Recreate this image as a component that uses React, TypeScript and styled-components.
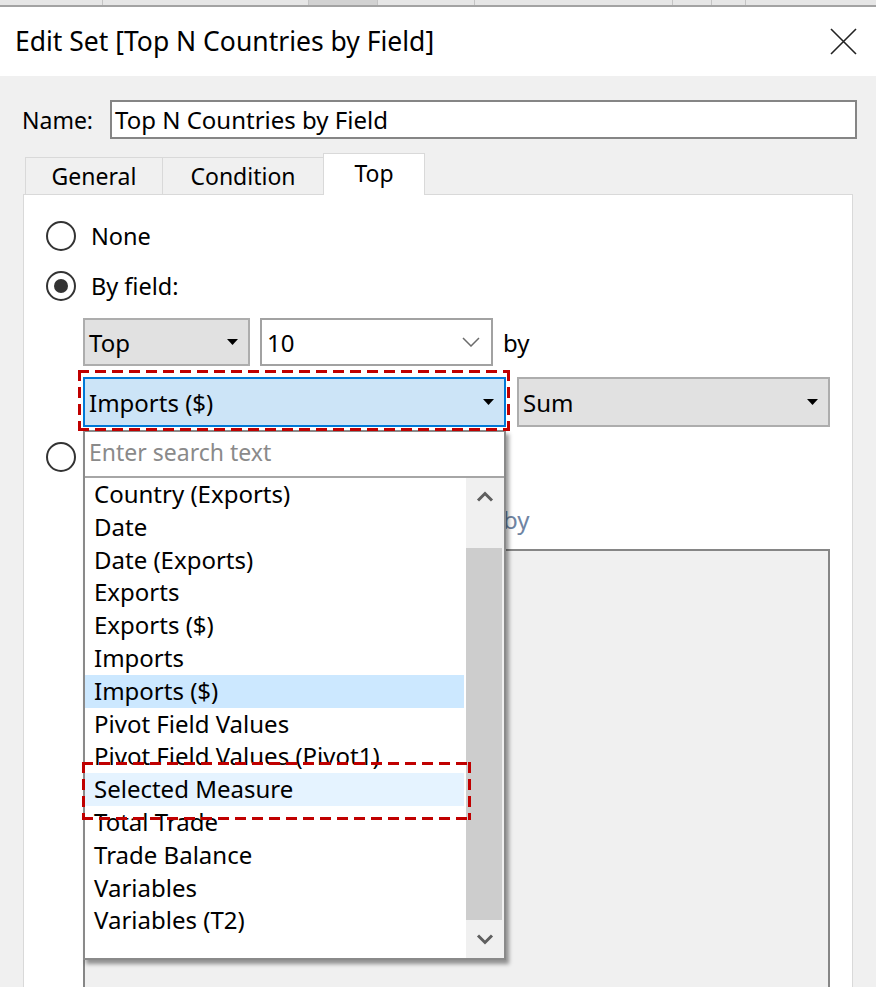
import React from "react";
import styled, { createGlobalStyle } from "styled-components";

const FONT = `"Segoe UI", "Noto Sans", "Open Sans", sans-serif`;

const GlobalStyle = createGlobalStyle`
  html, body { margin: 0; padding: 0; background: #f0f0f0; }
  body { font-family: ${FONT}; color: #000; }
  #root { width: 876px; height: 987px; overflow: hidden; }
  * { box-sizing: border-box; }
`;

const Window = styled.div`
  width: 876px;
  height: 987px;
  display: flex;
  flex-direction: column;
  background: #f0f0f0;
  overflow: hidden;
`;

const TopStrip = styled.div`
  height: 7px;
  flex: none;
  display: flex;
  background: #e6e6e6;
  border-bottom: 2px solid #a3a3a3;
`;

const StripCell = styled.div<{ $w: number; $dark?: boolean }>`
  width: ${(p) => p.$w}px;
  flex: none;
  border-right: 1px solid #c4c4c4;
  background: ${(p) => (p.$dark ? "#d2d2d2" : "transparent")};
`;

const TitleBar = styled.div`
  height: 69px;
  flex: none;
  background: #fff;
  display: flex;
  align-items: center;
  justify-content: space-between;
  padding: 0 19px 0 15px;
`;

const Title = styled.div`
  font-size: 26.5px;
  line-height: 1;
  color: #000;
`;

const Body = styled.div`
  flex: 1;
  min-height: 0;
  display: flex;
  flex-direction: column;
  padding: 24px 0 0 22px;
`;

const NameRow = styled.div`
  display: flex;
  align-items: center;
  height: 39px;
`;

const NameLabel = styled.span`
  width: 88px;
  font-size: 23px;
`;

const NameInput = styled.div`
  width: 747px;
  height: 39px;
  border: 2px solid #858585;
  background: #fff;
  display: flex;
  align-items: center;
  padding-left: 3px;
  font-size: 24px;
`;

const TabStrip = styled.div`
  display: flex;
  align-items: flex-end;
  height: 41px;
  margin: 14px 0 0 3px;
  position: relative;
  z-index: 1;
`;

const Tab = styled.div<{ $w: number; $active?: boolean }>`
  width: ${(p) => p.$w}px;
  height: ${(p) => (p.$active ? 42 : 37)}px;
  margin-bottom: ${(p) => (p.$active ? -1 : 0)}px;
  margin-right: -1px;
  border: 1px solid #d9d9d9;
  border-bottom: none;
  background: ${(p) => (p.$active ? "#fff" : "#f0f0f0")};
  display: flex;
  align-items: center;
  justify-content: center;
  padding-bottom: ${(p) => (p.$active ? 4 : 0)}px;
  font-size: 23px;
`;

const Panel = styled.div`
  margin-left: 1px;
  width: 830px;
  flex: 1;
  background: #fff;
  border: 1px solid #d9d9d9;
  border-bottom: none;
  padding: 21px 0 0 22px;
  display: flex;
  flex-direction: column;
`;

const OptionRow = styled.div<{ $mt: number }>`
  display: flex;
  align-items: center;
  gap: 15px;
  height: 40px;
  margin-top: ${(p) => p.$mt}px;
  font-size: 23.5px;
`;

const RadioCircle = styled.span<{ $checked?: boolean }>`
  width: 30px;
  height: 30px;
  flex: none;
  border-radius: 50%;
  border: 2px solid #333;
  background: #fff;
  display: flex;
  align-items: center;
  justify-content: center;
  &::after {
    content: "";
    width: 14px;
    height: 14px;
    border-radius: 50%;
    background: #333;
    display: ${(p) => (p.$checked ? "block" : "none")};
  }
`;

const FieldRow = styled.div<{ $mt: number; $h: number; $gap: number }>`
  display: flex;
  align-items: center;
  gap: ${(p) => p.$gap}px;
  height: ${(p) => p.$h}px;
  margin: ${(p) => p.$mt}px 0 0 37px;
  font-size: 24px;
`;

const SelectBox = styled.div<{ $w: number; $variant?: "normal" | "focused" | "disabled" }>`
  position: relative;
  width: ${(p) => p.$w}px;
  height: 100%;
  flex: none;
  display: flex;
  align-items: center;
  justify-content: space-between;
  padding: 0 10px 0 4px;
  font-size: 24px;
  color: #000;
  background: ${(p) =>
    p.$variant === "focused" ? "#cce4f7" : p.$variant === "disabled" ? "#f0f0f0" : "#e1e1e1"};
  border: 2px solid
    ${(p) => (p.$variant === "focused" ? "#0078d7" : p.$variant === "disabled" ? "#cccccc" : "#adadad")};
`;

const ComboBox = styled.div<{ $w: number; $disabled?: boolean }>`
  width: ${(p) => p.$w}px;
  height: 100%;
  flex: none;
  display: flex;
  align-items: center;
  justify-content: space-between;
  padding: 0 11px 0 5px;
  font-size: 24px;
  background: ${(p) => (p.$disabled ? "#f0f0f0" : "#fff")};
  border: 2px solid ${(p) => (p.$disabled ? "#cccccc" : "#a2a2a2")};
`;

const ByText = styled.span<{ $disabled?: boolean }>`
  font-size: 24px;
  color: ${(p) => (p.$disabled ? "#6f84a3" : "#000")};
`;

const FormulaBox = styled.div`
  margin: 6px 0 0 37px;
  width: 747px;
  flex: 1;
  background: #f0f0f0;
  border: 2px solid #868686;
  border-bottom: none;
`;

const Popup = styled.div`
  position: absolute;
  left: 0;
  top: calc(100% + 3px);
  width: 423px;
  height: 530px;
  background: #fff;
  border: 2px solid #8a8a8a;
  box-shadow: 3px 4px 4px rgba(0, 0, 0, 0.4);
  z-index: 5;
  display: flex;
  flex-direction: column;
`;

const SearchField = styled.div`
  height: 46px;
  flex: none;
  border-bottom: 2px solid #a6a6a6;
  display: flex;
  align-items: center;
  padding: 0 0 4px 4px;
  font-size: 23px;
  color: #8a8a8a;
`;

const ListArea = styled.div`
  flex: 1;
  display: flex;
  min-height: 0;
`;

const ItemColumn = styled.div`
  flex: 1;
  padding-right: 2px;
`;

const Item = styled.div<{ $state?: "selected" | "hover" }>`
  position: relative;
  height: 32.8px;
  line-height: 32.8px;
  padding-left: 9px;
  font-size: 24px;
  white-space: nowrap;
  background: ${(p) =>
    p.$state === "selected" ? "#cce8ff" : p.$state === "hover" ? "#e5f3ff" : "transparent"};
`;

const ScrollBar = styled.div`
  width: 38px;
  flex: none;
  background: #f0f0f0;
  display: flex;
  flex-direction: column;
`;

const ScrollBtn = styled.div<{ $h: number }>`
  height: ${(p) => p.$h}px;
  flex: none;
  display: flex;
  align-items: center;
  justify-content: center;
`;

const Track = styled.div`
  flex: 1;
  display: flex;
  flex-direction: column;
  justify-content: flex-end;
`;

const Thumb = styled.div`
  height: 372px;
  width: 36px;
  background: #cdcdcd;
`;

const Anchor = styled.div`
  position: relative;
  height: 100%;
  flex: none;
`;

const DASH = "#c00000";

const AnnoBox = styled.div<{ $t: number; $l: number; $r: number; $b: number }>`
  position: absolute;
  top: ${(p) => p.$t}px;
  left: ${(p) => p.$l}px;
  right: ${(p) => p.$r}px;
  bottom: ${(p) => p.$b}px;
  z-index: 7;
  pointer-events: none;
  background:
    linear-gradient(90deg, ${DASH} 11px, transparent 0) top left / 17px 3px repeat-x,
    linear-gradient(90deg, ${DASH} 11px, transparent 0) bottom left / 17px 3px repeat-x,
    linear-gradient(180deg, ${DASH} 11px, transparent 0) top left / 3px 17px repeat-y,
    linear-gradient(180deg, ${DASH} 11px, transparent 0) top right / 3px 17px repeat-y;
`;

const Triangle = () => (
  <svg width="11" height="6" viewBox="0 0 11 6">
    <polygon points="0,0 11,0 5.5,6" fill="#000" />
  </svg>
);

const ComboChevron = () => (
  <svg width="18" height="10" viewBox="0 0 18 10">
    <path d="M1 1 L9 9 L17 1" fill="none" stroke="#6b6b6b" strokeWidth="1.5" />
  </svg>
);

const ScrollChevron = ({ up }: { up?: boolean }) => (
  <svg width="18" height="11" viewBox="0 0 18 11">
    <path
      d={up ? "M2 9.5 L9 2.5 L16 9.5" : "M2 1.5 L9 8.5 L16 1.5"}
      fill="none"
      stroke="#5f5f5f"
      strokeWidth="3"
    />
  </svg>
);

const CloseIcon = () => (
  <svg width="27" height="27" viewBox="0 0 27 27">
    <path d="M1 1 L26 26 M26 1 L1 26" stroke="#222" strokeWidth="1.6" />
  </svg>
);

const fields = [
  "Country (Exports)",
  "Date",
  "Date (Exports)",
  "Exports",
  "Exports ($)",
  "Imports",
  "Imports ($)",
  "Pivot Field Values",
  "Pivot Field Values (Pivot1)",
  "Selected Measure",
  "Total Trade",
  "Trade Balance",
  "Variables",
  "Variables (T2)",
];

const stripCells = [
  { w: 103 },
  { w: 206 },
  { w: 69, dark: true },
  { w: 97 },
  { w: 198 },
  { w: 39 },
  { w: 34 },
];

export default function App() {
  return (
    <>
      <GlobalStyle />
      <Window>
        <TopStrip>
          {stripCells.map((c, i) => (
            <StripCell key={i} $w={c.w} $dark={c.dark} />
          ))}
        </TopStrip>
        <TitleBar>
          <Title>Edit Set [Top N Countries by Field]</Title>
          <CloseIcon />
        </TitleBar>
        <Body>
          <NameRow>
            <NameLabel>Name:</NameLabel>
            <NameInput>Top N Countries by Field</NameInput>
          </NameRow>
          <TabStrip>
            <Tab $w={138}>General</Tab>
            <Tab $w={162}>Condition</Tab>
            <Tab $w={102} $active>
              Top
            </Tab>
          </TabStrip>
          <Panel>
            <OptionRow $mt={0}>
              <RadioCircle />
              <span>None</span>
            </OptionRow>
            <OptionRow $mt={10}>
              <RadioCircle $checked />
              <span>By field:</span>
            </OptionRow>
            <FieldRow $mt={12} $h={48} $gap={10}>
              <SelectBox $w={167}>
                <span>Top</span>
                <Triangle />
              </SelectBox>
              <ComboBox $w={233}>
                <span>10</span>
                <ComboChevron />
              </ComboBox>
              <ByText>by</ByText>
            </FieldRow>
            <FieldRow $mt={11} $h={50} $gap={11}>
              <Anchor>
                <SelectBox $w={423} $variant="focused">
                  <span>Imports ($)</span>
                  <Triangle />
                </SelectBox>
                <AnnoBox $t={-7} $l={-5} $r={-4} $b={-4} />
                <Popup>
                  <SearchField>Enter search text</SearchField>
                  <ListArea>
                    <ItemColumn>
                      {fields.map((f) => (
                        <Item
                          key={f}
                          $state={
                            f === "Imports ($)" ? "selected" : f === "Selected Measure" ? "hover" : undefined
                          }
                        >
                          {f}
                          {f === "Selected Measure" && <AnnoBox $t={-11} $l={-3} $r={-7} $b={-14} />}
                        </Item>
                      ))}
                    </ItemColumn>
                    <ScrollBar>
                      <ScrollBtn $h={36}>
                        <ScrollChevron up />
                      </ScrollBtn>
                      <Track>
                        <Thumb />
                      </Track>
                      <ScrollBtn $h={38}>
                        <ScrollChevron />
                      </ScrollBtn>
                    </ScrollBar>
                  </ListArea>
                </Popup>
              </Anchor>
              <SelectBox $w={313}>
                <span>Sum</span>
                <Triangle />
              </SelectBox>
            </FieldRow>
            <OptionRow $mt={10}>
              <RadioCircle />
            </OptionRow>
            <FieldRow $mt={18} $h={48} $gap={10}>
              <SelectBox $w={167} $variant="disabled">
                <span />
                <Triangle />
              </SelectBox>
              <ComboBox $w={233} $disabled>
                <span />
                <ComboChevron />
              </ComboBox>
              <ByText $disabled>by</ByText>
            </FieldRow>
            <FormulaBox />
          </Panel>
        </Body>
      </Window>
    </>
  );
}
